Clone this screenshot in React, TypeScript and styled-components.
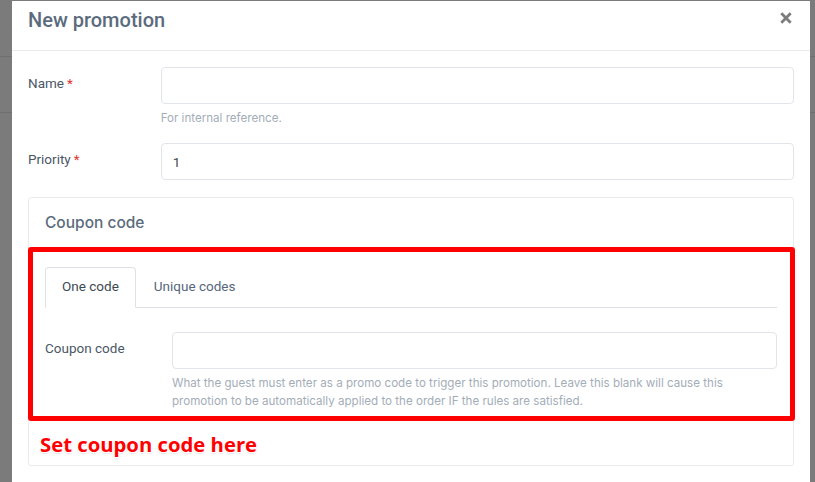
import React from "react";
import styled, { createGlobalStyle } from "styled-components";

const GlobalStyle = createGlobalStyle`
  html, body { margin: 0; padding: 0; }
  body {
    width: 815px;
    height: 482px;
    overflow: hidden;
    background-color: #7b7b7b;
    background-image: linear-gradient(
      to bottom,
      transparent 56px, #6f6f6f 56px, #6f6f6f 57px, transparent 57px,
      transparent 112px, #6f6f6f 112px, #6f6f6f 113px, transparent 113px
    );
    font-family: Roboto, "Liberation Sans", sans-serif;
  }
  * { box-sizing: border-box; }
`;

const Backdrop = styled.div`
  height: 482px;
  padding: 1px 5px 0 12px;
  overflow: hidden;
`;

const Modal = styled.div`
  background: #fff;
  height: 100%;
  display: flex;
  flex-direction: column;
`;

const Header = styled.div`
  height: 50px;
  flex: none;
  border-bottom: 1px solid #e9ecef;
  display: flex;
  justify-content: space-between;
  align-items: flex-start;
  padding: 2px 18px 0 16px;
`;

const Title = styled.h5`
  margin: 0;
  font-family: Roboto, "Liberation Sans", sans-serif;
  font-weight: 500;
  font-size: 20px;
  line-height: 34px;
  color: #5b6b7d;
`;

const CloseButton = styled.button`
  margin-top: 9px;
  width: 12px;
  height: 12px;
  padding: 0;
  border: 0;
  background: none;
  display: flex;
  cursor: pointer;
`;

const Body = styled.div`
  padding: 16px 16px 0;
`;

const FormRow = styled.div<{ $mb?: number }>`
  display: grid;
  grid-template-columns: calc((100% + 30px) / 6) 1fr;
  margin-bottom: ${(p) => (p.$mb ?? 17)}px;
`;

const Label = styled.label`
  font-size: 13.5px;
  line-height: 20px;
  padding-top: 6px;
  color: #4b5766;
`;

const Required = styled.span`
  color: #e3342f;
  margin-left: 3px;
`;

const Field = styled.div`
  display: flex;
  flex-direction: column;
`;

const Input = styled.input`
  height: 37px;
  width: 100%;
  border: 1px solid #e1e5ea;
  border-radius: 4px;
  padding: 0 11px;
  font-family: Roboto, "Liberation Sans", sans-serif;
  font-size: 13.5px;
  color: #3d4852;
  outline: none;
`;

const Help = styled.div`
  margin-top: 6px;
  font-family: Inter, "Liberation Sans", sans-serif;
  font-size: 11.6px;
  line-height: 17.5px;
  color: #a3adb8;
`;

const Card = styled.div`
  position: relative;
  border: 1px solid #e9ecef;
  border-radius: 3px;
`;

const CardHeader = styled.div`
  height: 49px;
  padding: 0 16px;
  font-family: Inter, "Liberation Sans", sans-serif;
  font-size: 15.5px;
  font-weight: 500;
  line-height: 49px;
  color: #5b6b7d;
`;

const CardBody = styled.div`
  padding: 20px 16px 55px;
`;

const TabList = styled.div`
  display: flex;
  height: 41px;
  border-bottom: 1px solid #dee2e6;
`;

const Tab = styled.div<{ $active?: boolean }>`
  height: 41px;
  margin-bottom: -1px;
  padding: 0 16px 3px ${(p) => (p.$active ? 16 : 17)}px;
  display: flex;
  align-items: center;
  font-size: 13.5px;
  border: 1px solid ${(p) => (p.$active ? "#dee2e6" : "transparent")};
  border-bottom-color: ${(p) => (p.$active ? "#fff" : "transparent")};
  border-radius: 4px 4px 0 0;
  background: ${(p) => (p.$active ? "#fff" : "transparent")};
  color: ${(p) => (p.$active ? "#3d4852" : "#56677a")};
`;

const TabPane = styled.div`
  padding-top: 24px;
`;

const Highlight = styled.div`
  position: absolute;
  top: 49px;
  left: -1px;
  right: -2px;
  height: 174px;
  border: 5px solid #ff0000;
  border-radius: 3px;
  pointer-events: none;
`;

const Callout = styled.div`
  position: absolute;
  top: 236px;
  left: 11px;
  font-family: "Open Sans", "Noto Sans", sans-serif;
  font-weight: 700;
  font-size: 20.3px;
  line-height: 1;
  color: #ff0000;
  white-space: nowrap;
  text-shadow:
    -1px -1px 0 #fff, 1px -1px 0 #fff, -1px 1px 0 #fff, 1px 1px 0 #fff,
    0 1px 2px rgba(0, 0, 0, 0.35);
`;

export default function App() {
  return (
    <>
      <GlobalStyle />
      <Backdrop>
        <Modal>
          <Header>
            <Title>New promotion</Title>
            <CloseButton aria-label="Close">
              <svg width="12" height="12" viewBox="0 0 12 12">
                <path d="M1.3 1.3 L10.7 10.7 M10.7 1.3 L1.3 10.7" stroke="#7d7d7d" strokeWidth="2.8" strokeLinecap="butt" />
              </svg>
            </CloseButton>
          </Header>
          <Body>
            <FormRow $mb={15.5}>
              <Label>
                Name<Required>*</Required>
              </Label>
              <Field>
                <Input />
                <Help>For internal reference.</Help>
              </Field>
            </FormRow>
            <FormRow>
              <Label>
                Priority<Required>*</Required>
              </Label>
              <Field>
                <Input defaultValue="1" />
              </Field>
            </FormRow>
            <Card>
              <CardHeader>Coupon code</CardHeader>
              <CardBody>
                <TabList>
                  <Tab $active>One code</Tab>
                  <Tab>Unique codes</Tab>
                </TabList>
                <TabPane>
                  <FormRow $mb={0}>
                    <Label>Coupon code</Label>
                    <Field>
                      <Input />
                      <Help>
                        What the guest must enter as a promo code to trigger this promotion. Leave this blank will
                        cause this promotion to be automatically applied to the order IF the rules are satisfied.
                      </Help>
                    </Field>
                  </FormRow>
                </TabPane>
              </CardBody>
              <Highlight />
              <Callout>Set coupon code here</Callout>
            </Card>
          </Body>
        </Modal>
      </Backdrop>
    </>
  );
}
